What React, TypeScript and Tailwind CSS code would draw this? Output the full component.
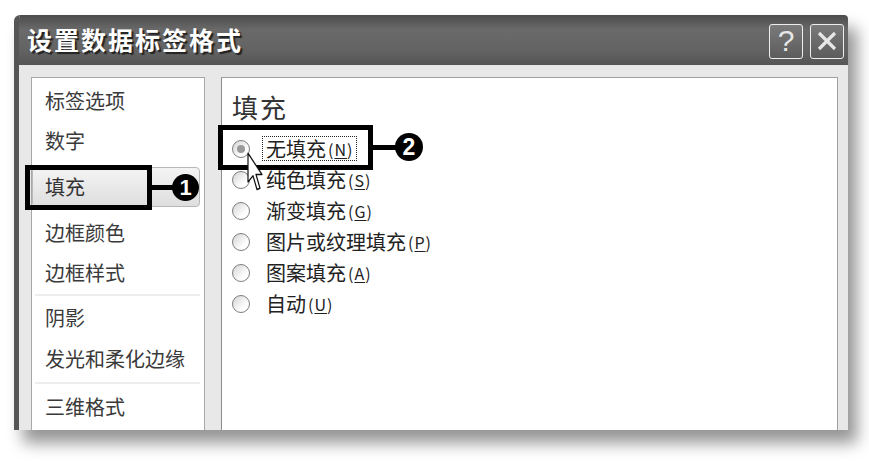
import React from "react";

const FONT = { fontFamily: '"Noto Sans CJK SC", "Noto Sans", sans-serif' };

function Radio({ checked }: { checked?: boolean }) {
  return (
    <div className="w-[18px] h-[18px] rounded-full border border-[#7e7e7e] bg-[linear-gradient(135deg,#d4d4d4,#ffffff_70%)] flex items-center justify-center shrink-0">
      {checked && <div className="w-[8px] h-[8px] rounded-full bg-[#9a9a9a]" />}
    </div>
  );
}

function Mn({ k }: { k: string }) {
  return (
    <span className="text-[16px] ml-[2px] tracking-[1px]">
      (<span className="underline underline-offset-2">{k}</span>)
    </span>
  );
}

function Option({ label, k, checked, focus }: { label: string; k: string; checked?: boolean; focus?: boolean }) {
  return (
    <div className="h-[31px] flex items-center">
      <Radio checked={checked} />
      <div
        className={
          focus
            ? "ml-[12px] px-[3px] h-[25px] flex items-center border border-dotted border-[#222] text-[20px] text-[#222]"
            : "ml-[16px] h-[25px] flex items-center text-[20px] text-[#222]"
        }
      >
        {label}
        <Mn k={k} />
      </div>
    </div>
  );
}

function LeftItem({ text, h }: { text: string; h: string }) {
  return (
    <div className={`${h} flex items-center pl-[13px] text-[20px] text-[#3a3a3a]`}>{text}</div>
  );
}

export default function App() {
  return (
    <div className="relative w-[869px] h-[464px] bg-white overflow-hidden pl-[14px] pt-[15px]" style={FONT}>
      <div className="w-[834px] h-[415px] flex flex-col rounded-tl-[6px] rounded-tr-[4px] border-l-[5px] border-[#555] shadow-[9px_13px_16px_rgba(0,0,0,0.42)] overflow-hidden">
        {/* Title bar */}
        <div className="h-[50px] shrink-0 flex items-center justify-between bg-[linear-gradient(180deg,#4c4c4c_0%,#6a6a6a_30%,#636363_70%,#555_100%)] pl-[8px] pr-[4px]">
          <div className="text-white text-[25px] font-bold tracking-[2px] [text-shadow:2px_2px_1px_#222]">
            设置数据标签格式
          </div>
          <div className="flex gap-[7px] mt-[2px]">
            <div className="w-[34px] h-[35px] rounded-[3px] border border-[#eee] bg-[linear-gradient(180deg,#7a7a7a,#5c5c5c)] flex items-center justify-center text-[#e6e6e6] text-[30px] leading-none" style={{ fontFamily: '"Liberation Sans", sans-serif' }}>
              ?
            </div>
            <div className="w-[34px] h-[35px] rounded-[3px] border border-[#eee] bg-[linear-gradient(180deg,#7a7a7a,#5c5c5c)] flex items-center justify-center">
              <svg width="24" height="24" viewBox="0 0 24 24">
                <path d="M4 4 L20 20 M20 4 L4 20" stroke="#e6e6e6" strokeWidth="3.2" />
              </svg>
            </div>
          </div>
        </div>
        {/* Body */}
        <div className="flex-1 flex bg-[#e8e8e8] pl-[12px] pr-[10px] pt-[12px] gap-[16px]">
          <div className="w-[174px] bg-white border border-b-0 border-[#a8a8a8] pt-[3px] pr-[4px]">
            <LeftItem text="标签选项" h="h-[40px]" />
            <LeftItem text="数字" h="h-[40px]" />
            <div className="h-[52px] pt-[6px]">
              <div className="h-[40px] rounded-[4px] border border-[#b8b8b8] bg-[linear-gradient(180deg,#f4f4f4,#dedede)] flex items-center pl-[12px] text-[20px] text-[#333]">
                填充
              </div>
            </div>
            <LeftItem text="边框颜色" h="h-[40px]" />
            <LeftItem text="边框样式" h="h-[40px]" />
            <div className="h-[4px] flex items-center pl-[3px]">
              <div className="h-[2px] w-full bg-[#ededed]" />
            </div>
            <LeftItem text="阴影" h="h-[42px]" />
            <LeftItem text="发光和柔化边缘" h="h-[40px]" />
            <div className="h-[8px] flex items-center pl-[3px]">
              <div className="h-[2px] w-full bg-[#ededed]" />
            </div>
            <LeftItem text="三维格式" h="h-[40px]" />
          </div>
          <div className="flex-1 bg-white border border-b-0 border-[#a0a0a0] border-l-[#8c8c8c] pl-[10px] pt-[13px]">
            <div className="h-[30px] flex items-center text-[26px] text-[#333] tracking-[2px]">填充</div>
            <div className="mt-[12px]">
              <Option label="无填充" k="N" checked focus />
              <Option label="纯色填充" k="S" />
              <Option label="渐变填充" k="G" />
              <Option label="图片或纹理填充" k="P" />
              <Option label="图案填充" k="A" />
              <Option label="自动" k="U" />
            </div>
          </div>
        </div>
      </div>

      {/* Annotation 1 */}
      <div className="absolute left-[25px] top-[165px] w-[127px] h-[45px] border-[5px] border-black" />
      <div className="absolute left-[150px] top-[185px] w-[24px] h-[5px] bg-black" />
      <div className="absolute left-[172px] top-[174px] w-[27px] h-[27px] rounded-full bg-black flex items-center justify-center text-white text-[22px] font-bold leading-none" style={{ fontFamily: '"Liberation Sans", sans-serif' }}>
        1
      </div>

      {/* Annotation 2 */}
      <div className="absolute left-[218px] top-[125px] w-[155px] h-[45px] border-[5px] border-black" />
      <div className="absolute left-[371px] top-[145px] w-[26px] h-[5px] bg-black" />
      <div className="absolute left-[395px] top-[133px] w-[28px] h-[28px] rounded-full bg-black flex items-center justify-center text-white text-[23px] font-bold leading-none" style={{ fontFamily: '"Liberation Sans", sans-serif' }}>
        2
      </div>

      {/* Cursor */}
      <svg className="absolute left-[247px] top-[152px]" width="16" height="40" viewBox="0 0 16 40">
        <path d="M1 1 L1 24 L6 19 L10 30 L13 29 L9 18 L15 18 Z" fill="white" stroke="#111" strokeWidth="1.2" strokeLinejoin="round" transform="scale(1 1.25)" />
      </svg>
    </div>
  );
}
